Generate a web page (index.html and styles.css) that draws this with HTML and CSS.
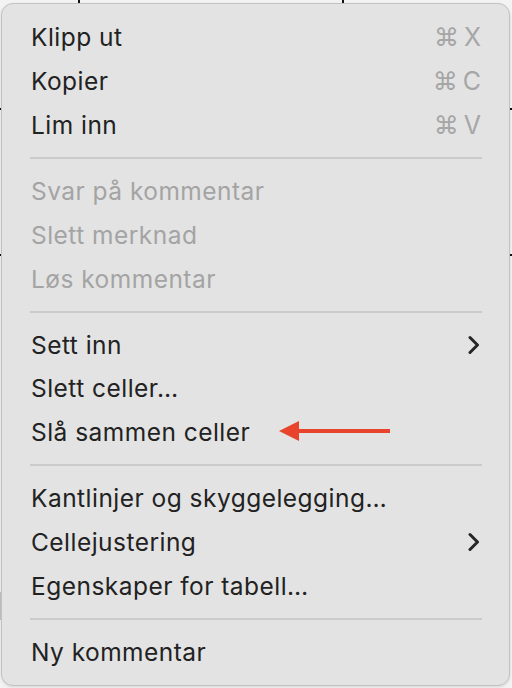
FILE: index.html
```html
<!DOCTYPE html>
<html lang="no">
<head>
<meta charset="utf-8">
<link rel="stylesheet" href="styles.css">
</head>
<body>
<div class="menu">
  <div class="item"><span class="label">Klipp ut</span><span class="key">⌘ X</span></div>
  <div class="item"><span class="label">Kopier</span><span class="key">⌘ C</span></div>
  <div class="item"><span class="label">Lim inn</span><span class="key">⌘ V</span></div>
  <div class="sep"></div>
  <div class="item disabled"><span class="label">Svar på kommentar</span></div>
  <div class="item disabled"><span class="label">Slett merknad</span></div>
  <div class="item disabled"><span class="label">Løs kommentar</span></div>
  <div class="sep"></div>
  <div class="item"><span class="label">Sett inn</span>
    <svg class="chev" width="12" height="20" viewBox="0 0 12 20"><path d="M2 2.5 L9.5 10 L2 17.5" fill="none" stroke="#262626" stroke-width="3" stroke-linecap="round" stroke-linejoin="round"/></svg>
  </div>
  <div class="item"><span class="label">Slett celler…</span></div>
  <div class="item has-arrow"><span class="label">Slå sammen celler</span>
    <svg class="arrow" width="112" height="22" viewBox="0 0 112 22"><polygon points="0,11 20,1 20,21" fill="#e8432b"/><rect x="18" y="9" width="93" height="4" fill="#e8432b"/></svg>
  </div>
  <div class="sep"></div>
  <div class="item"><span class="label">Kantlinjer og skyggelegging…</span></div>
  <div class="item"><span class="label">Cellejustering</span>
    <svg class="chev" width="12" height="20" viewBox="0 0 12 20"><path d="M2 2.5 L9.5 10 L2 17.5" fill="none" stroke="#262626" stroke-width="3" stroke-linecap="round" stroke-linejoin="round"/></svg>
  </div>
  <div class="item"><span class="label">Egenskaper for tabell…</span></div>
  <div class="sep"></div>
  <div class="item"><span class="label">Ny kommentar</span></div>
</div>
</body>
</html>
```

FILE: styles.css
```css
html, body {
  margin: 0;
  padding: 0;
}
body {
  width: 512px;
  height: 688px;
  overflow: hidden;
  background-color: #f3f3f3;
  background-image:
    linear-gradient(to right, transparent 78px, #111 78px, #111 80px, transparent 80px),
    linear-gradient(to right, transparent 342px, #111 342px, #111 344px, transparent 344px),
    linear-gradient(to bottom, transparent 108px, #111 108px, #111 110px, transparent 110px),
    linear-gradient(to bottom, transparent 254px, #111 254px, #111 256px, transparent 256px),
    linear-gradient(to bottom, transparent 592px, #c4c4c4 592px, #c4c4c4 620px, transparent 620px);
  background-size: 100% 10px, 100% 10px, 100% 100%, 100% 100%, 4px 100%;
  background-repeat: no-repeat;
  background-position: 0 0, 0 0, 0 0, 0 0, 0 0;
  font-family: Inter, "Liberation Sans", sans-serif;
}
.menu {
  box-sizing: border-box;
  width: 509px;
  height: 683px;
  margin: 3px 2px 0 1px;
  background: #e3e3e3;
  border: 1px solid #c2c2c2;
  border-radius: 12px;
  box-shadow: 0 1px 3px rgba(0,0,0,0.12);
  padding: 11px 0 11px;
  display: flex;
  flex-direction: column;
}
.item {
  position: relative;
  display: flex;
  align-items: center;
  justify-content: space-between;
  height: 44px;
  padding: 0 29px 0 29px;
  font-size: 24.5px;
  color: #222;
  letter-spacing: 0.47px;
}
.item.disabled {
  color: #a4a4a4;
}
.key {
  color: #a6a6a6;
  font-size: 25px;
  letter-spacing: 0;
  word-spacing: -2px;
  margin-right: -1px;
}
.arrow {
  position: absolute;
  left: 277px;
  top: 10px;
}
.sep {
  height: 22px;
  display: flex;
  align-items: center;
  padding: 0 27px 0 28px;
}
.sep::before {
  content: "";
  display: block;
  width: 100%;
  height: 2px;
  background: #cbcbcb;
}
```
